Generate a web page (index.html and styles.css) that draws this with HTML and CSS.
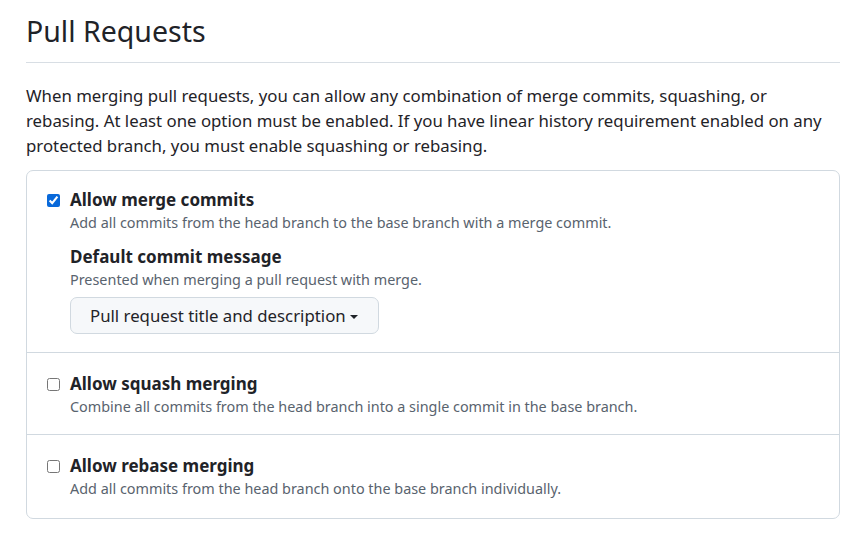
FILE: index.html
```html
<!DOCTYPE html>
<html>
<head>
<meta charset="utf-8">
<link rel="stylesheet" href="styles.css">
</head>
<body>
<div class="page">
  <div class="subhead">
    <h2 class="subhead-title">Pull Requests</h2>
  </div>
  <p class="intro">When merging pull requests, you can allow any combination of merge commits, squashing, or rebasing. At least one option must be enabled. If you have linear history requirement enabled on any protected branch, you must enable squashing or rebasing.</p>
  <div class="box">
    <div class="row">
      <div class="check-item">
        <input type="checkbox" class="cb" checked>
        <div class="check-body">
          <div class="label">Allow merge commits</div>
          <div class="note">Add all commits from the head branch to the base branch with a merge commit.</div>
          <div class="sub">
            <div class="label">Default commit message</div>
            <div class="note">Presented when merging a pull request with merge.</div>
            <button class="btn">Pull request title and description <span class="caret"></span></button>
          </div>
        </div>
      </div>
    </div>
    <div class="row">
      <div class="check-item">
        <input type="checkbox" class="cb">
        <div class="check-body">
          <div class="label">Allow squash merging</div>
          <div class="note">Combine all commits from the head branch into a single commit in the base branch.</div>
        </div>
      </div>
    </div>
    <div class="row">
      <div class="check-item">
        <input type="checkbox" class="cb">
        <div class="check-body">
          <div class="label">Allow rebase merging</div>
          <div class="note">Add all commits from the head branch onto the base branch individually.</div>
        </div>
      </div>
    </div>
  </div>
</div>
</body>
</html>
```
FILE: styles.css
```css
* { box-sizing: border-box; }
body {
  margin: 0;
  background: #ffffff;
  font-family: "Noto Sans", "Open Sans", sans-serif;
  color: #1f2328;
}
.page {
  padding: 10px 6px 0 26px;
}
.subhead {
  border-bottom: 1px solid #d8dee4;
  padding-bottom: 10px;
}
.subhead-title {
  margin: 0;
  font-size: 28.5px;
  font-weight: 400;
  line-height: 42px;
}
.intro {
  margin: 20px 0 12px;
  font-size: 16.8px;
  line-height: 25px;
}
.box {
  border: 1px solid #d1d9e0;
  border-radius: 7px;
}
.row {
  padding: 19px 20px 16px 20px;
  border-top: 1px solid #d1d9e0;
}
.row:first-child { border-top: none; padding-top: 17px; padding-bottom: 18px; }
.row:last-child { padding-bottom: 18px; }
.check-item {
  display: flex;
  align-items: flex-start;
  gap: 10px;
}
.cb {
  margin: 6px 0 0;
  width: 13px;
  height: 13px;
  accent-color: #0969da;
}
.label {
  font-size: 17px;
  font-weight: 700;
  line-height: 24px;
}
.note {
  font-size: 14.4px;
  color: #59636e;
  line-height: 22px;
}
.sub {
  margin-top: 11px;
}
.btn {
  margin-top: 6px;
  font-family: inherit;
  font-size: 16.8px;
  color: #1f2328;
  background: #f6f8fa;
  border: 1px solid #d1d9e0;
  border-radius: 7px;
  height: 37px;
  padding: 0 20px 0 19px;
  display: inline-flex;
  align-items: center;
  gap: 4px;
}
.caret {
  display: inline-block;
  width: 0;
  height: 0;
  border-left: 4px solid transparent;
  border-right: 4px solid transparent;
  border-top: 4px solid #1f2328;
  margin-top: 2px;
}
```
